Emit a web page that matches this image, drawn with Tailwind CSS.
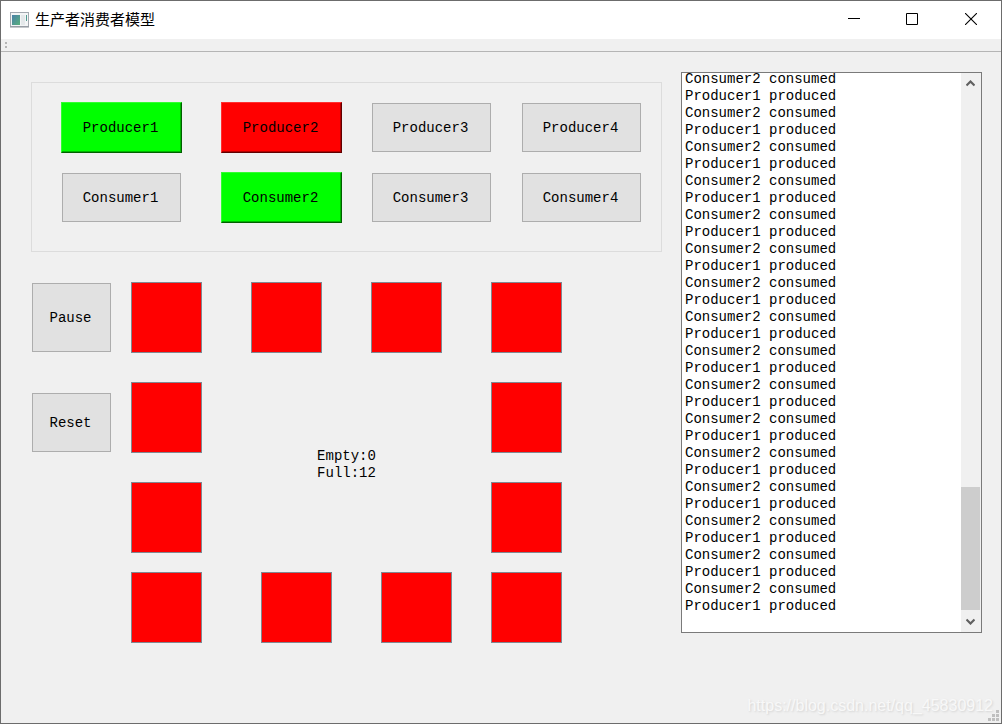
<!DOCTYPE html>
<html lang="zh-CN">
<head>
<meta charset="utf-8">
<title>生产者消费者模型</title>
<script src="https://cdn.jsdelivr.net/npm/@tailwindcss/browser@4"></script>
</head>
<body class="bg-[#f0f0f0]">
<div class="relative flex min-h-screen flex-col border border-[#6c6c6c] bg-[#f0f0f0] font-['Liberation_Mono','Noto_Sans_CJK_SC',monospace] text-sm leading-[17px] text-black">

  <header class="flex h-[38px] items-center bg-white pl-[9px]">
    <svg class="mr-1.5 h-4 w-[19px] shrink-0" viewBox="0 0 19 16" aria-hidden="true">
      <defs><linearGradient id="pane" x1="0" y1="0" x2="1" y2="1"><stop offset="0" stop-color="#4a80a8"/><stop offset="1" stop-color="#58b07c"/></linearGradient></defs>
      <rect x=".5" y=".5" width="18" height="14" fill="#f3f5f6" stroke="#a3a9b0"/>
      <path d="M0 15h19" stroke="#8c929a"/>
      <rect x="2" y="3" width="8" height="10" fill="url(#pane)"/>
      <rect x="11" y="3" width="4" height="10" fill="#e4e8ea"/>
      <rect x="16" y="3" width="1" height="6" fill="#4f9a90"/>
    </svg>
    <h1 class="pb-[3px] font-['Noto_Sans_CJK_SC',sans-serif] text-[15px]">生产者消费者模型</h1>
    <div class="ml-auto flex h-full pr-px">
      <button type="button" aria-label="Minimize" class="flex w-[58px] items-center justify-center pb-0.5"><svg width="12" height="12" viewBox="0 0 12 12"><path d="M0 5.5h12" stroke="#000"/></svg></button>
      <button type="button" aria-label="Maximize" class="flex w-[58px] items-center justify-center pb-0.5"><svg width="12" height="12" viewBox="0 0 12 12"><path d="M.5 .5h11v11H.5z" fill="none" stroke="#000"/></svg></button>
      <button type="button" aria-label="Close" class="flex w-[59px] items-center justify-center pb-0.5"><svg width="12" height="12" viewBox="0 0 12 12"><path d="M0 0l12 12M12 0L0 12" stroke="#000" stroke-width="1.1"/></svg></button>
    </div>
  </header>

  <div class="flex h-[13px] items-center border-b border-[#b5b5b5] pl-1">
    <svg width="3" height="6" viewBox="0 0 3 6" aria-hidden="true"><path d="M0 0h2v2H0zM0 4h2v2H0z" fill="#b5b5b5"/></svg>
  </div>

  <main class="flex flex-1 items-start gap-[19px] pt-5 pr-[19px] pl-[30px]">
    <div class="min-w-0 flex-1 pt-2.5">
      <section aria-label="Threads" class="grid grid-cols-[160fr_150fr_150fr_121fr] gap-y-[19px] border border-[#dcdcdc] pt-[19px] pr-[19px] pb-7 pl-[29px]">
        <button type="button" class="h-[51px] w-[121px] border border-t-[#30ff30] border-r-[#006000] border-b-[#006000] border-l-[#30ff30] bg-[#00ff00] pt-0.5 pr-0.5 shadow-[inset_-1px_-1px_0_#00b400]">Producer1</button>
        <button type="button" class="h-[51px] w-[121px] border border-t-[#ff3030] border-r-[#600000] border-b-[#600000] border-l-[#ff3030] bg-[#ff0000] pt-0.5 pr-0.5 shadow-[inset_-1px_-1px_0_#b40000]">Producer2</button>
        <button type="button" class="m-px h-[49px] w-[119px] border border-[#adadad] bg-[#e1e1e1] pt-0.5 pr-0.5">Producer3</button>
        <button type="button" class="m-px h-[49px] w-[119px] border border-[#adadad] bg-[#e1e1e1] pt-0.5 pr-0.5">Producer4</button>
        <button type="button" class="m-px h-[49px] w-[119px] border border-[#adadad] bg-[#e1e1e1] pt-0.5 pr-0.5">Consumer1</button>
        <button type="button" class="h-[51px] w-[121px] border border-t-[#30ff30] border-r-[#006000] border-b-[#006000] border-l-[#30ff30] bg-[#00ff00] pt-0.5 pr-0.5 shadow-[inset_-1px_-1px_0_#00b400]">Consumer2</button>
        <button type="button" class="m-px h-[49px] w-[119px] border border-[#adadad] bg-[#e1e1e1] pt-0.5 pr-0.5">Consumer3</button>
        <button type="button" class="m-px h-[49px] w-[119px] border border-[#adadad] bg-[#e1e1e1] pt-0.5 pr-0.5">Consumer4</button>
      </section>

      <div class="mt-[30px] flex gap-[19px]">
        <div class="flex flex-col gap-[41px] p-px">
          <button type="button" class="h-[69px] w-[79px] border border-[#adadad] bg-[#e1e1e1] pt-0.5 pr-0.5">Pause</button>
          <button type="button" class="h-[59px] w-[79px] border border-[#adadad] bg-[#e1e1e1] pt-0.5 pr-0.5">Reset</button>
        </div>
        <section aria-label="Buffer" class="w-[431px]">
          <div class="flex justify-between">
            <div class="size-[71px] border border-[#828790] bg-[#ff0000]"></div>
            <div class="size-[71px] border border-[#828790] bg-[#ff0000]"></div>
            <div class="size-[71px] border border-[#828790] bg-[#ff0000]"></div>
            <div class="size-[71px] border border-[#828790] bg-[#ff0000]"></div>
          </div>
          <div class="flex items-center justify-between pt-[29px] pb-[19px]">
            <div class="flex flex-col gap-[29px]">
              <div class="size-[71px] border border-[#828790] bg-[#ff0000]"></div>
              <div class="size-[71px] border border-[#828790] bg-[#ff0000]"></div>
            </div>
            <div class="pb-1.5"><p>Empty:0</p><p>Full:12</p></div>
            <div class="flex flex-col gap-[29px]">
              <div class="size-[71px] border border-[#828790] bg-[#ff0000]"></div>
              <div class="size-[71px] border border-[#828790] bg-[#ff0000]"></div>
            </div>
          </div>
          <div class="grid grid-cols-[130fr_120fr_110fr_71fr]">
            <div class="size-[71px] border border-[#828790] bg-[#ff0000]"></div>
            <div class="size-[71px] border border-[#828790] bg-[#ff0000]"></div>
            <div class="size-[71px] border border-[#828790] bg-[#ff0000]"></div>
            <div class="size-[71px] border border-[#828790] bg-[#ff0000]"></div>
          </div>
        </section>
      </div>
    </div>

    <div class="flex h-[561px] w-[301px] shrink-0 border border-[#7a7a7a] bg-white">
      <textarea id="log" readonly aria-label="Event log" class="min-w-0 flex-1 resize-none overflow-hidden pl-[3px] outline-none">Consumer2 consumed
Producer1 produced
Consumer2 consumed
Producer1 produced
Consumer2 consumed
Producer1 produced
Consumer2 consumed
Producer1 produced
Consumer2 consumed
Producer1 produced
Consumer2 consumed
Producer1 produced
Consumer2 consumed
Producer1 produced
Consumer2 consumed
Producer1 produced
Consumer2 consumed
Producer1 produced
Consumer2 consumed
Producer1 produced
Consumer2 consumed
Producer1 produced
Consumer2 consumed
Producer1 produced
Consumer2 consumed
Producer1 produced
Consumer2 consumed
Producer1 produced
Consumer2 consumed
Producer1 produced
Consumer2 consumed
Producer1 produced
</textarea>
      <div class="flex w-5 flex-col bg-[#f0f0f0]">
        <button type="button" aria-label="Scroll up" class="flex h-[22px] w-[19px] items-center justify-center pb-px"><svg width="9" height="7" viewBox="0 0 9 7"><path d="M.5 5.500L4.500 1.500l4 4" fill="none" stroke="#606060" stroke-width="2.200"/></svg></button>
        <div class="flex flex-1 flex-col justify-end"><div class="h-[123px] w-[19px] bg-[#cdcdcd]"></div></div>
        <button type="button" aria-label="Scroll down" class="flex h-[22px] w-[19px] items-center justify-center"><svg width="9" height="7" viewBox="0 0 9 7"><path d="M.5 1.500l4 4 4-4" fill="none" stroke="#606060" stroke-width="2.200"/></svg></button>
      </div>
    </div>
  </main>

  <svg class="absolute right-[2px] bottom-[2px]" width="11" height="11" viewBox="0 0 11 11" aria-hidden="true"><path d="M8 0h3v3H8zM4 4h3v3H4zM8 4h3v3H8zM0 8h3v3H0zM4 8h3v3H4zM8 8h3v3H8z" fill="#bfbfbf"/></svg>
  <a href="https://blog.csdn.net/qq_45830912" class="absolute right-2 bottom-2 font-['Liberation_Sans',sans-serif] text-base leading-[18px] text-[#f8f8f8] [text-shadow:1px_1px_2px_#d4d4d4]">https://blog.csdn.net/qq_45830912</a>
</div>
<script>
  const log = document.getElementById('log');
  log.scrollTop = log.scrollHeight;
</script>
</body>
</html>
